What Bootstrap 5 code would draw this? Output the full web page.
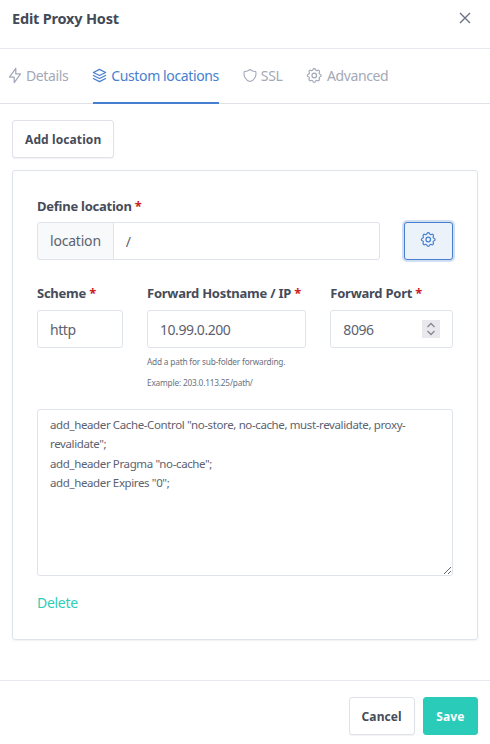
<!doctype html>
<html lang="en">
<head>
<meta charset="utf-8">
<link href="https://cdn.jsdelivr.net/npm/bootstrap@5.3.0/dist/css/bootstrap.min.css" rel="stylesheet">
<style>
html,body{height:744px;overflow:hidden;background:#fff}
body{font-family:"Noto Sans","Liberation Sans",sans-serif;font-size:13.5px;color:#4b5563;letter-spacing:-.2px}
.dlg{height:744px;border:0;border-radius:0;display:flex;flex-direction:column}
.dlg .modal-header{height:49px;padding:0 12px;border-bottom:1px solid #e6e9ef;align-items:center}
.dlg .modal-title{font-size:14.5px;font-weight:700;color:#434a57;line-height:38px;margin-top:-12px}
.x-btn{background:none;border:0;padding:0;width:14px;height:14px;margin:-12px 6px 0 0;line-height:0;color:#6b7280}
.tabs-bar{height:55px;padding-left:9px;gap:25px;border-bottom:1px solid #dfe2e8;flex-wrap:nowrap}
.tabs-bar .nav-link{border:0;border-bottom:1px solid transparent;margin-bottom:-1px;border-radius:0;background:none;padding:0;height:55px;display:flex;align-items:center;gap:5px;color:#a3a9b8;font-size:14px;letter-spacing:-.38px;padding-bottom:1px}
.tabs-bar .nav-link.active{color:#467fcf;border-bottom:2px solid #467fcf;background:none;padding-bottom:0}
.ico{height:15px;fill:none;stroke:currentColor;stroke-width:1.6;stroke-linecap:round;stroke-linejoin:round;flex:none;overflow:visible}
.ico-zap{width:12px}
.ico-stack{width:13px}
.ico-shield{width:12px}
.ico-gear{width:14.500px}
.dlg-body{padding:16px 12px 0;flex:1}
.add-btn,.cancel-btn{background:#fff;border:1px solid #dfe2e8;border-radius:3px;font-size:12px;font-weight:700;color:#464c59;height:38px;padding:1px 12px 0;box-shadow:0 1px 1px rgba(0,0,0,.05);letter-spacing:.1px}
.loc-card{margin-top:12px;height:470px;border:1px solid #dfe3eb;border-radius:3px;box-shadow:0 1px 2px rgba(0,0,0,.06);padding:25px 24px 24px}
.fld-label{display:block;font-size:13px;font-weight:700;color:#464c59;line-height:20px;margin:0 0 6px;letter-spacing:-.25px;white-space:nowrap}
.row-gap .fld-label{margin-bottom:7px}
.req{color:#cd201f}
.fld{height:38px;border:1px solid #dfe3eb;border-radius:3px;font-size:14px;color:#5c6270;padding:0 12px;box-shadow:none;letter-spacing:-.45px}
.fld:focus{border-color:#dfe3eb;box-shadow:none}
.input-group-text.loc-pre{background:#f8f9fb;border:1px solid #dfe3eb;border-radius:3px 0 0 3px;color:#5c6270;font-size:14px;height:38px;padding:0 12px 1px}
.gear-btn{width:100%;height:38px;margin-top:26px;background:#ecf2fa;border:1px solid #467fcf;border-radius:3px;color:#467fcf;box-shadow:0 0 0 2px rgba(70,127,207,.25);padding:0 0 4px;display:flex;align-items:center;justify-content:center}
.row-gap{margin-top:23px}
.hint{font-size:8.3px;line-height:14px;color:#6b7280;margin-top:7px;white-space:nowrap}
.hint+.hint{margin-top:7px}
input[type=number]::-webkit-inner-spin-button{-webkit-appearance:none;appearance:none;opacity:1;width:18px;height:18px;margin-right:0;background:#e9e9ed url("data:image/svg+xml,%3Csvg xmlns='http://www.w3.org/2000/svg' viewBox='0 0 18 18' fill='none' stroke='%23868a94' stroke-width='1.400'%3E%3Cpath d='M5.500 7 9 3.500 12.500 7M5.500 11 9 14.500 12.500 11'/%3E%3C/svg%3E") center/18px 18px no-repeat}
.code-area{display:block;width:100%;height:167px;margin-top:19px;border:1px solid #dfe3eb;border-radius:3px;font-size:11.5px;line-height:19.3px;color:#5c6270;padding:5px 12px;box-shadow:none;letter-spacing:-.38px}
.code-area:focus{border-color:#dfe3eb;box-shadow:none}
.del-link{display:inline-block;margin-top:17px;font-size:14px;color:#2dcdb8;text-decoration:none;line-height:20px;letter-spacing:-.3px}
.dlg .modal-footer{height:64px;padding:16px 12px 0;border-top:1px solid #e6e9ef;gap:8px;margin-top:auto;flex-wrap:nowrap;align-items:flex-start}
.dlg .modal-footer>*{margin:0}
.save-btn{background:#2bcbba;border:1px solid #2bcbba;border-radius:3px;color:#fff;font-size:12px;font-weight:700;height:38px;padding:1px 12.500px 0;letter-spacing:.1px}
</style>
</head>
<body>
<div class="modal-content dlg">
  <div class="modal-header">
    <h5 class="modal-title">Edit Proxy Host</h5>
    <button type="button" class="x-btn ms-auto" aria-label="Close">
      <svg width="14" height="14" viewBox="0 0 14 14" fill="none" stroke="currentColor" stroke-width="1.4"><path d="M2 2l10 10M12 2L2 12"/></svg>
    </button>
  </div>
  <ul class="nav nav-tabs tabs-bar">
    <li class="nav-item"><a class="nav-link" href="#"><svg class="ico ico-zap" viewBox="4.500 2.500 15 19"><path d="M13 3v7h6l-8 11v-7H5l8-11"/></svg>Details</a></li>
    <li class="nav-item"><a class="nav-link active" href="#"><svg class="ico ico-stack" viewBox="3.500 3.500 17 17"><path d="M12 4 4 8l8 4 8-4-8-4"/><path d="m4 12 8 4 8-4"/><path d="m4 16 8 4 8-4"/></svg>Custom locations</a></li>
    <li class="nav-item"><a class="nav-link" href="#"><svg class="ico ico-shield" viewBox="3 2.500 18 19"><path d="M12 3a12 12 0 0 0 8.500 3a12 12 0 0 1-8.500 15a12 12 0 0 1-8.500-15a12 12 0 0 0 8.500-3"/></svg>SSL</a></li>
    <li class="nav-item"><a class="nav-link" href="#"><svg class="ico ico-gear" viewBox="2.500 2.500 19 19"><path d="M10.325 4.317c.426-1.756 2.924-1.756 3.350 0a1.724 1.724 0 0 0 2.573 1.066c1.543-.94 3.310.826 2.370 2.370a1.724 1.724 0 0 0 1.065 2.572c1.756.426 1.756 2.924 0 3.350a1.724 1.724 0 0 0-1.066 2.573c.94 1.543-.826 3.310-2.370 2.370a1.724 1.724 0 0 0-2.572 1.065c-.426 1.756-2.924 1.756-3.350 0a1.724 1.724 0 0 0-2.573-1.066c-1.543.94-3.310-.826-2.370-2.370a1.724 1.724 0 0 0-1.065-2.572c-1.756-.426-1.756-2.924 0-3.350a1.724 1.724 0 0 0 1.066-2.573c-.94-1.543.826-3.310 2.370-2.370c1 .608 2.296.07 2.572-1.065z"/><circle cx="12" cy="12" r="3"/></svg>Advanced</a></li>
  </ul>
  <div class="dlg-body">
    <button type="button" class="add-btn">Add location</button>
    <div class="loc-card">
      <div class="row gx-4">
        <div class="col-10">
          <label class="fld-label">Define location <span class="req">*</span></label>
          <div class="input-group">
            <span class="input-group-text loc-pre">location</span>
            <input class="form-control fld" type="text" value="/">
          </div>
        </div>
        <div class="col-2">
          <button type="button" class="gear-btn" aria-label="Settings"><svg class="ico ico-gear" viewBox="2.500 2.500 19 19"><path d="M10.325 4.317c.426-1.756 2.924-1.756 3.350 0a1.724 1.724 0 0 0 2.573 1.066c1.543-.94 3.310.826 2.370 2.370a1.724 1.724 0 0 0 1.065 2.572c1.756.426 1.756 2.924 0 3.350a1.724 1.724 0 0 0-1.066 2.573c.94 1.543-.826 3.310-2.370 2.370a1.724 1.724 0 0 0-2.572 1.065c-.426 1.756-2.924 1.756-3.350 0a1.724 1.724 0 0 0-2.573-1.066c-1.543.94-3.310-.826-2.370-2.370a1.724 1.724 0 0 0-1.065-2.572c-1.756-.426-1.756-2.924 0-3.350a1.724 1.724 0 0 0 1.066-2.573c-.94-1.543.826-3.310 2.370-2.370c1 .608 2.296.07 2.572-1.065z"/><circle cx="12" cy="12" r="3"/></svg></button>
        </div>
      </div>
      <div class="row gx-4 row-gap">
        <div class="col-3">
          <label class="fld-label">Scheme <span class="req">*</span></label>
          <input class="form-control fld" type="text" value="http">
        </div>
        <div class="col-5">
          <label class="fld-label">Forward Hostname / IP <span class="req">*</span></label>
          <input class="form-control fld" type="text" value="10.99.0.200">
          <div class="hint">Add a path for sub-folder forwarding.</div>
          <div class="hint">Example: 203.0.113.25/path/</div>
        </div>
        <div class="col-4">
          <label class="fld-label">Forward Port <span class="req">*</span></label>
          <input class="form-control fld" type="number" value="8096">
        </div>
      </div>
      <textarea class="form-control code-area" spellcheck="false">add_header Cache-Control "no-store, no-cache, must-revalidate, proxy-revalidate";
add_header Pragma "no-cache";
add_header Expires "0";</textarea>
      <a class="del-link" href="#">Delete</a>
    </div>
  </div>
  <div class="modal-footer">
    <button type="button" class="cancel-btn">Cancel</button>
    <button type="button" class="save-btn">Save</button>
  </div>
</div>
<script src="https://cdn.jsdelivr.net/npm/bootstrap@5.3.0/dist/js/bootstrap.bundle.min.js"></script>
</body>
</html>
